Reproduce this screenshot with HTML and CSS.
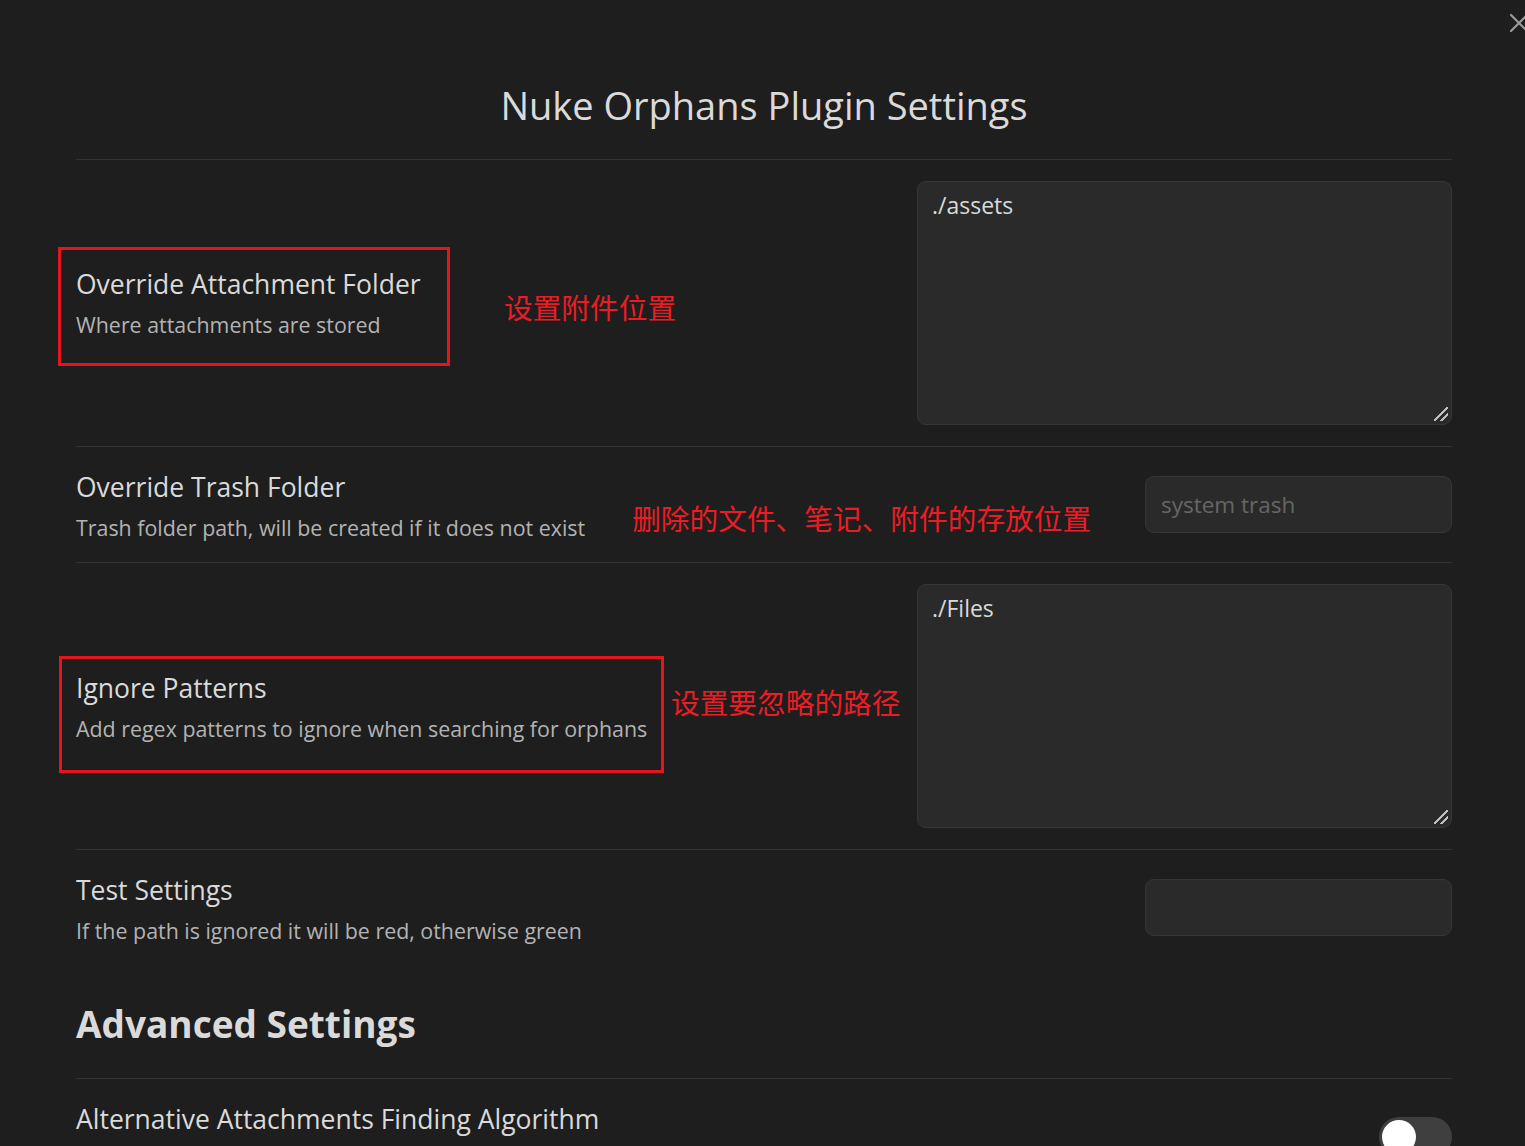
FILE: index.html
```html
<!DOCTYPE html>
<html lang="en">
<head>
<meta charset="utf-8">
<title>Nuke Orphans Plugin Settings</title>
<link rel="stylesheet" href="styles.css">
</head>
<body>
<div class="modal">
  <svg class="close" width="20" height="20" viewBox="0 0 20 20" aria-hidden="true">
    <path d="M2 2 L18 18 M18 2 L2 18" stroke="#9a9a9a" stroke-width="2.2" stroke-linecap="round" fill="none"/>
  </svg>
  <div class="content">
    <h2 class="title">Nuke Orphans Plugin Settings</h2>

    <div class="setting">
      <div class="info marked mark-1">
        <div class="name">Override Attachment Folder</div>
        <div class="desc">Where attachments are stored</div>
      </div>
      <div class="note note-1">设置附件位置</div>
      <div class="control">
        <div class="textarea">./assets<span class="grip"></span></div>
      </div>
    </div>

    <div class="setting">
      <div class="info">
        <div class="name">Override Trash Folder</div>
        <div class="desc">Trash folder path, will be created if it does not exist</div>
      </div>
      <div class="note note-2">删除的文件、笔记、附件的存放位置</div>
      <div class="control">
        <div class="input placeholder">system trash</div>
      </div>
    </div>

    <div class="setting">
      <div class="info marked mark-2">
        <div class="name">Ignore Patterns</div>
        <div class="desc">Add regex patterns to ignore when searching for orphans</div>
      </div>
      <div class="note note-3">设置要忽略的路径</div>
      <div class="control">
        <div class="textarea">./Files<span class="grip"></span></div>
      </div>
    </div>

    <div class="setting">
      <div class="info">
        <div class="name">Test Settings</div>
        <div class="desc">If the path is ignored it will be red, otherwise green</div>
      </div>
      <div class="control">
        <div class="input"></div>
      </div>
    </div>

    <h3 class="heading">Advanced Settings</h3>

    <div class="setting">
      <div class="info">
        <div class="name">Alternative Attachments Finding Algorithm</div>
        <div class="desc">&nbsp;</div>
      </div>
      <div class="control">
        <div class="toggle"><span class="knob"></span></div>
      </div>
    </div>
  </div>
</div>
</body>
</html>
```

FILE: styles.css
```css
* { box-sizing: border-box; }
html, body {
  margin: 0;
  padding: 0;
  background: #1e1e1e;
  height: 100%;
  overflow: hidden;
}
body {
  font-family: "Open Sans", "Noto Sans", "Noto Sans CJK SC", sans-serif;
  color: #dadada;
}
.modal {
  position: relative;
  width: 1525px;
  height: 1146px;
  overflow: hidden;
}
.close {
  position: absolute;
  left: 1509px;
  top: 13px;
}
.content {
  margin-left: 76px;
  width: 1376px;
  padding-top: 76px;
}
.title {
  margin: 0;
  font-size: 38px;
  font-weight: 500;
  line-height: 58px;
  text-align: center;
  color: #dadada;
  padding-bottom: 25px;
}
.setting {
  display: flex;
  align-items: center;
  border-top: 1px solid #333333;
  padding: 21px 0;
}
.info {
  display: flex;
  flex-direction: column;
  flex: 0 0 auto;
}
.name {
  font-size: 26.5px;
  line-height: 39px;
  color: #dadada;
  white-space: nowrap;
}
.desc {
  font-size: 21.4px;
  line-height: 27px;
  padding-top: 7px;
  color: #b3b3b3;
  white-space: nowrap;
}
.marked {
  border: 3px solid #e3161f;
}
.mark-1 {
  width: 392px;
  height: 119px;
  margin-left: -18px;
  margin-top: 7px;
  padding: 15px 0 0 15px;
}
.mark-2 {
  width: 605px;
  height: 117px;
  margin-left: -17px;
  margin-top: 16px;
  padding: 10px 0 0 14px;
}
.note {
  font-family: "Noto Sans CJK SC", sans-serif;
  font-size: 28.7px;
  line-height: 40px;
  color: #ec1c24;
  white-space: nowrap;
}
.note-1 { margin-left: 54px; margin-top: 8px; }
.note-2 { margin-left: 47px; margin-top: 26px; }
.note-3 { margin-left: 7px; margin-top: -8px; }
.control {
  margin-left: auto;
  display: flex;
  justify-content: flex-end;
}
.textarea {
  position: relative;
  width: 535px;
  height: 244px;
  background: #2a2a2a;
  border: 1px solid #363636;
  border-radius: 9px;
  padding: 6px 14px;
  font-size: 23px;
  line-height: 34px;
  color: #dadada;
}
.grip {
  position: absolute;
  right: 3px;
  bottom: 3px;
  width: 14px;
  height: 14px;
  background:
    linear-gradient(135deg, transparent 0 46%, #bdbdbd 46% 56%, transparent 56% 70%, #bdbdbd 70% 80%, transparent 80%);
}
.input {
  width: 307px;
  height: 57px;
  background: #2a2a2a;
  border: 1px solid #363636;
  border-radius: 9px;
  padding: 0 15px;
  font-size: 22.5px;
  line-height: 55px;
}
.placeholder { color: #666666; }
.heading {
  margin: 0;
  padding: 34px 0 29px;
  font-size: 37px;
  font-weight: 700;
  line-height: 50px;
  color: #dadada;
}
.toggle {
  position: relative;
  width: 73px;
  height: 40px;
  border-radius: 20px;
  background: #3f3f3f;
}
.knob {
  position: absolute;
  left: 3px;
  top: 3px;
  width: 34px;
  height: 34px;
  border-radius: 50%;
  background: #ffffff;
}
```
